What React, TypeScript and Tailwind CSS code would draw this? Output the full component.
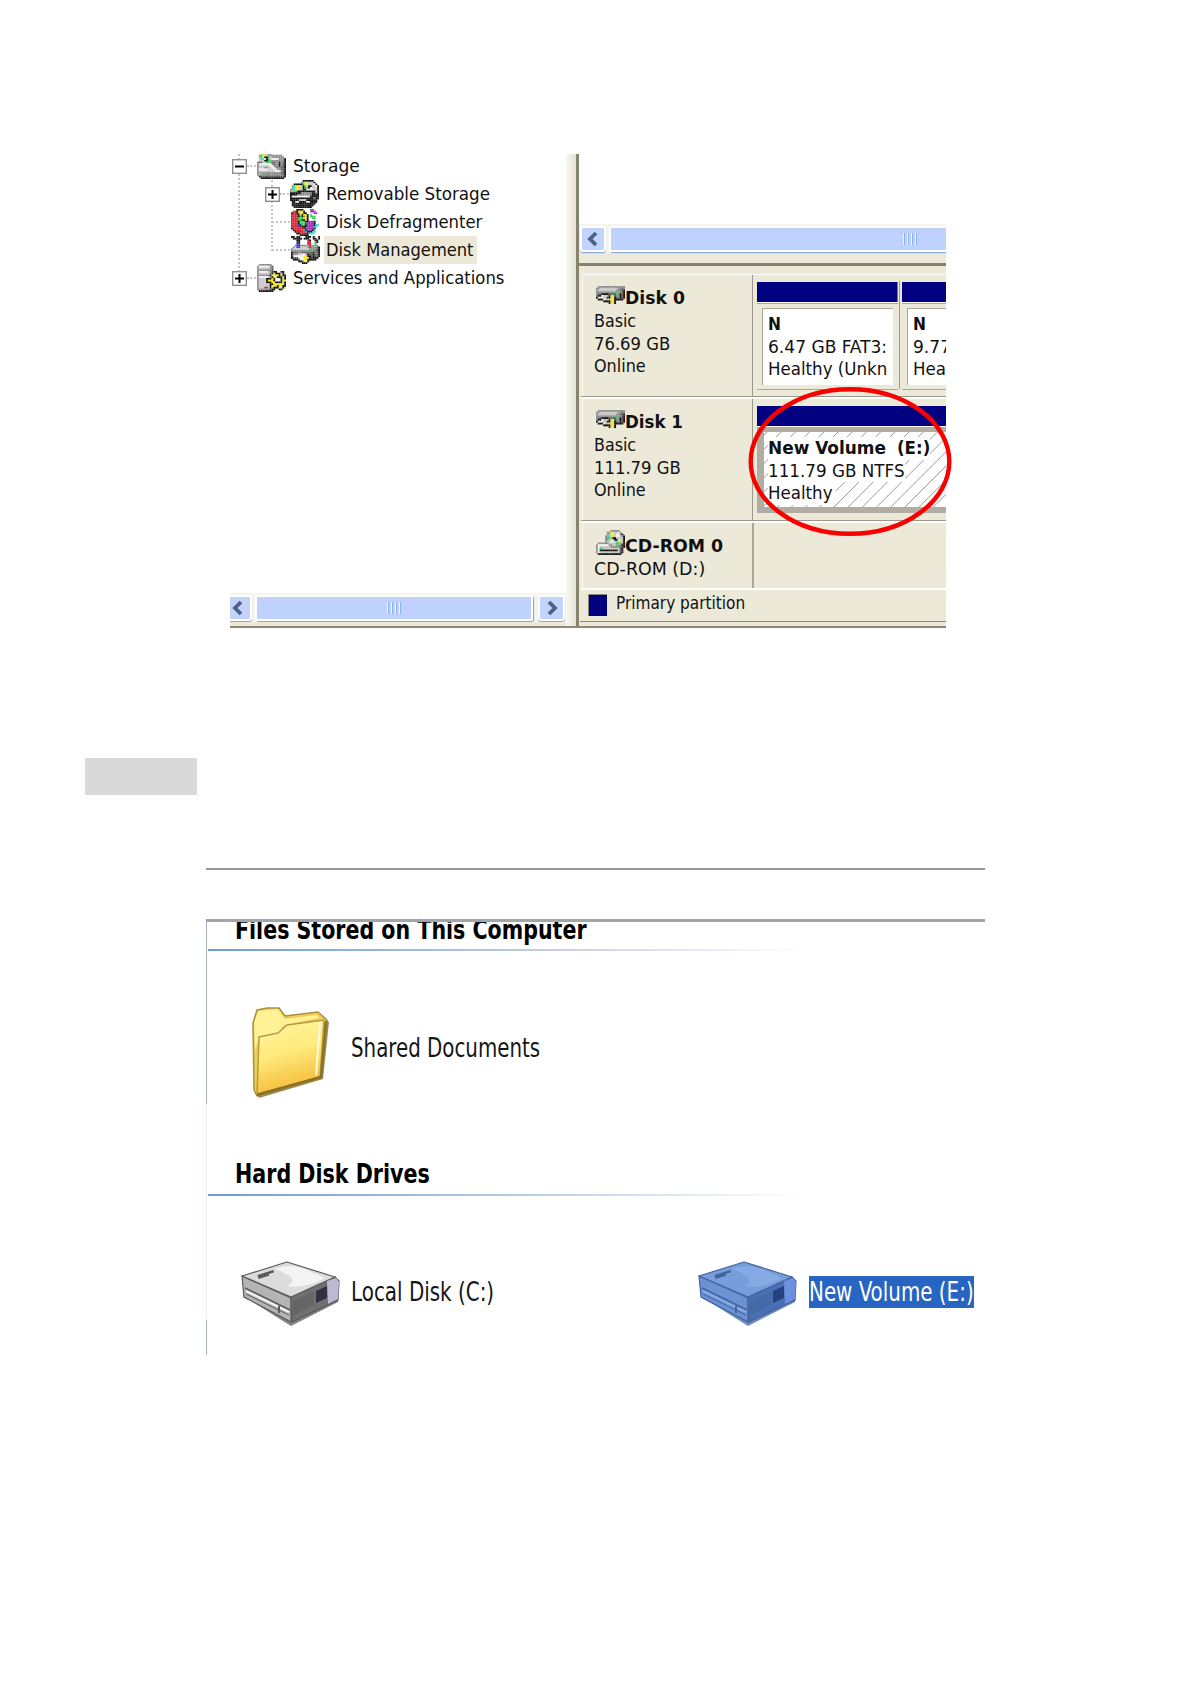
import React, { useLayoutEffect, useRef, useState } from 'react';

interface LabelProps {
  children: string;
  width: number;
  className?: string;
}

// Text squeezed or stretched to a given width
const Label: React.FC<LabelProps> = ({ children, width, className = '' }) => {
  const ref = useRef<HTMLSpanElement>(null);
  const [scale, setScale] = useState(1);

  useLayoutEffect(() => {
    if (ref.current) setScale(width / ref.current.offsetWidth);
  }, [width]);

  return (
    <span className={`block shrink-0 ${className}`} style={{ width }}>
      <span ref={ref} className="inline-block origin-left whitespace-pre" style={{ transform: `scaleX(${scale})` }}>
        {children}
      </span>
    </span>
  );
};

const PALETTE: Record<string, string> = {
  k: '#111111',
  d: '#5c5c5c',
  g: '#8d8d8d',
  l: '#c6c6c6',
  w: '#f4f4f4',
  y: '#f2e52c',
  o: '#8f8412',
  e: '#35cf55',
  c: '#35d3d3',
  r: '#d61f2c',
  m: '#9d2cb4',
  b: '#2438c4',
};

const STORAGE = [
  '..eyylgg........',
  '.eeyylgggggggg..',
  '.ceykkglggggggg.',
  '.lccwkelwwwwgggk',
  '.lllkkeegggggggk',
  'gddlleegddggkgdk',
  'gwwwwwwwgdggkgdk',
  'gllllllwwgggkgdk',
  'glllggllwwgggddk',
  'gwwwwwlllwwggddk',
  'glllllllllwwwgdk',
  'gggggggggggggddk',
  'glegggggggggggdk',
  '.kdddddddddddddk',
  '..kkkkkkkkkkkkk.',
];

const REMOVABLE = [
  '.......kkkkkk...',
  '......gcyylllk..',
  '..kkkkkeyylllwk.',
  '.gcyyylkeykkllwk',
  '.ccyyllkeekwlllk',
  'gecyyllkkwwwwllk',
  'gleekkkkkkkkkklk',
  'kkkkkkggggggkkgk',
  'kkkkggggggggkkkk',
  'kwwwwwwwwwwkkkkk',
  'kkkkkkkkkkkkkgkk',
  'kkkkkllllkkkkkk.',
  '.kkwwkkkkwwkkkk.',
  '.kkkkkkkkkkkkk..',
  '.kkkkkkkkkkkk...',
  '..kkkkkkkkkk....',
];

const DEFRAG = [
  '...kkkk....mm...',
  '.rrkyyyk...mmm..',
  'krrkoyykk....mm.',
  'rrrrkykyyk.e....',
  'rrrrkekoyk.eee..',
  'rrrreeeyyk..ee..',
  'rrrroekkyk......',
  'rrrrkeeekkmmmk..',
  'rrrrkeeemmmmmk..',
  'rrrrbkeekmmmmkcc',
  'rrrrrbkkkmmmmcc.',
  'krrrrrrkmmmmmk..',
  '.krrrrrckmmmkc..',
  '..krrrrrckkkcc..',
  '...kkrrrrkccc...',
  '.....kkkkk......',
];

const MANAGEMENT = [
  'kk.kk...kkk.k..k',
  '.kkkkk.kkk..kk.k',
  '...kk....rk..kk.',
  '...bk....rr..ek.',
  '...bb....rr..e..',
  '..gbbgggggrggeg.',
  '.glbbllllgrgggdk',
  'glllllllllggggdk',
  'ggggggggggeegddk',
  'kdddggddddddkgdk',
  'kgggllwwgkddkddk',
  'klwwwwwyykkdkddk',
  'kdddwwwyyykdkkk.',
  '.kkkdwwyykkkkk..',
  '....kkdyyk......',
  '......kkk.......',
];

const SERVICES = [
  '.ggggggg........',
  'gwwwwwwgd.......',
  'gllllllgd.......',
  'ggggggggd.......',
  'gwwwwwlgdkk..kk.',
  'gllllllgkykkkyk.',
  'gggggggkyyyykykk',
  'gwwwwwlgkyykkkyk',
  'gllllkkkyk...kyk',
  'gllllkyyyk...kyy',
  'gllllkkkyykkkkyk',
  'gllllllkkyyyyyyk',
  'gllllllkyyykyykk',
  'glllrrlkykkkyyk.',
  'gggggggdkk..kk..',
  '.kkkkkkkk.......',
];

const DISK = [
  '.ggggggggggggggg',
  'ggllllllllllggdg',
  'gllllllllllggddk',
  'ggggggggggegggdk',
  'gddkkkkddddegkdk',
  'gkkwlllkyydggkdk',
  'kwwwllkkyykdgkdk',
  '.kkkwlllyykkkkk.',
  '....kkkkyyk.....',
  '.......kyyk.....',
];

const CDROM = [
  '........ggggg...',
  '......ggyyllwg..',
  '......gcyylwwgk.',
  '.....gccyylwwlgk',
  '.....geelkkllllk',
  '.....gelllkkwylk',
  '.....gllwwlcyylk',
  '.gggggglllleecgk',
  'gwwwwwwgglleegkk',
  'gwllllllgggggddk',
  'gweellllllllldk.',
  'gwkkkkkkkkkkldk.',
  'gwllllllllllldk.',
  '.kkkkkkkkkkkkk..',
];

const PixelIcon: React.FC<{ map: string[]; className: string }> = ({ map, className }) => (
  <svg viewBox={`0 0 16 ${map.length}`} preserveAspectRatio="none" className={`block shrink-0 ${className}`}>
    {map.flatMap((line, y) =>
      line.split('').map((ch, x) =>
        ch === '.' ? null : <rect key={`${x}-${y}`} x={x} y={y} width={1.05} height={1.05} fill={PALETTE[ch]} />
      )
    )}
  </svg>
);

const Expander: React.FC<{ open?: boolean }> = ({ open }) => (
  <svg viewBox="0 0 15 15" className="block w-[15px] h-[15px] shrink-0">
    <rect x="0.7" y="0.7" width="13.6" height="13.6" fill="#fff" stroke="#8f8f8f" strokeWidth="1.4" />
    <path d={open ? 'M3 7.5h9' : 'M3 7.5h9M7.5 3v9'} stroke="#000" strokeWidth="2" />
  </svg>
);

const Dots = () => <div className="w-[9px] shrink-0 border-t-2 border-dotted border-[#c4c4c4]" />;

const Tree = () => (
  <div className="relative h-[439px] overflow-hidden text-[17px] leading-[28px] text-[#111]">
    <div className="absolute left-[8px] top-0 h-[118px] border-l-2 border-dotted border-[#c4c4c4]" />
    <div className="absolute left-[41px] top-[26px] h-[71px] border-l-2 border-dotted border-[#c4c4c4]" />
    <div className="relative -mt-[2px]">
      <div className="flex items-center h-[28px] pl-[2px]">
        <Expander open />
        <Dots />
        <PixelIcon map={STORAGE} className="w-[29px] h-[26px] ml-[1px] mr-[7px]" />
        <Label width={67}>Storage</Label>
      </div>
      <div className="flex items-center h-[28px] pl-[35px]">
        <Expander />
        <Dots />
        <PixelIcon map={REMOVABLE} className="w-[29px] h-[28px] ml-[1px] mr-[7px]" />
        <Label width={164}>Removable Storage</Label>
      </div>
      <div className="flex items-center h-[28px] pl-[42px]">
        <div className="w-[18px] shrink-0 border-t-2 border-dotted border-[#c4c4c4]" />
        <PixelIcon map={DEFRAG} className="w-[28px] h-[27px] ml-[1px] mr-[7px]" />
        <Label width={156}>Disk Defragmenter</Label>
      </div>
      <div className="flex items-center h-[28px] pl-[42px]">
        <div className="w-[18px] shrink-0 border-t-2 border-dotted border-[#c4c4c4]" />
        <PixelIcon map={MANAGEMENT} className="w-[29px] h-[28px] ml-[1px] mr-[4px]" />
        <div className="bg-[#ece9d8] w-[153px] pl-[2px]">
          <Label width={147}>Disk Management</Label>
        </div>
      </div>
      <div className="flex items-center h-[28px] pl-[2px]">
        <Expander />
        <Dots />
        <PixelIcon map={SERVICES} className="w-[29px] h-[28px] ml-[1px] mr-[7px]" />
        <Label width={211}>Services and Applications</Label>
      </div>
    </div>
  </div>
);

const ScrollArrow: React.FC<{ right?: boolean; className: string }> = ({ right, className }) => (
  <div
    className={`flex items-center justify-center shrink-0 h-[26px] rounded-[3px] border-2 border-white bg-[#c2d3fc] shadow-[0_1px_1px_#7f9fdc] ${className}`}
  >
    <svg viewBox="0 0 12 16" className="w-[12px] h-[16px]">
      <path d={right ? 'M3 2l6 6-6 6' : 'M9 2L3 8l6 6'} fill="none" stroke="#4d6185" strokeWidth="3.8" />
    </svg>
  </div>
);

const Grip = () => (
  <div className="flex gap-[2px]">
    {[0, 1, 2, 3].map((i) => (
      <div key={i} className="w-[2px] h-[12px] border-l border-[#eef4fe] bg-[#8cb0f8]" />
    ))}
  </div>
);

const DriveHeading: React.FC<{ map: string[]; name: string; width: number; icon: string }> = ({
  map,
  name,
  width,
  icon,
}) => (
  <div className="flex h-[23px] pl-[2px]">
    <PixelIcon map={map} className={icon} />
    <Label width={width} className="font-bold">
      {name}
    </Label>
  </div>
);

const DiskCell: React.FC<{ children: React.ReactNode; className?: string }> = ({ children, className = '' }) => (
  <div className={`w-[170px] ml-[3px] pl-[11px] shrink-0 border-l border-[#faf9f4] ${className}`}>{children}</div>
);

const Row: React.FC<{ children: React.ReactNode; className: string }> = ({ children, className }) => (
  <div className={`flex shrink-0 overflow-hidden ${className}`}>{children}</div>
);

const Rule = () => <div className="h-[3px] shrink-0 ml-[2px] border-t border-[#9c998c] bg-[#fffffa]" />;

const Partition: React.FC<{ lines: [string, number][]; name: string; className: string; box: string }> = ({
  lines,
  name,
  className,
  box,
}) => (
  <div className={`shrink-0 h-[108px] border-b border-[#aaa796] ${className}`}>
    <div className="h-[20px] bg-[#000080] border-r border-[#77756e]" />
    <div className="h-[1px] bg-white" />
    <div className="h-[1px] bg-[#aaa796]" />
    <div
      className={`mt-[4px] ml-[5px] h-[77px] border-t border-l border-[#aaa796] bg-white pl-[5px] pt-[4px] overflow-hidden ${box}`}
    >
      <Label width={13} className="font-bold">
        {name}
      </Label>
      {lines.map(([text, width]) => (
        <Label key={text} width={width}>
          {text}
        </Label>
      ))}
    </div>
  </div>
);

const DiskList = () => (
  <div className="text-[18.5px] leading-[22.6px] text-[#111]">
    <Row className="h-[121px]">
      <DiskCell className="pt-[12px]">
        <DriveHeading map={DISK} name="Disk 0" width={60} icon="w-[29px] h-[18px] -mt-[1px]" />
        <Label width={42}>Basic</Label>
        <Label width={76}>76.69 GB</Label>
        <Label width={52}>Online</Label>
      </DiskCell>
      <div className="flex flex-1 border-l border-[#9c998c] pl-[4px] pt-[7px] min-w-0">
        <Partition
          name="N"
          lines={[
            ['6.47 GB FAT3:', 119],
            ['Healthy (Unkn', 119],
          ]}
          className="w-[141px]"
          box="w-[131px]"
        />
        <div className="w-[3px] shrink-0 h-[108px] border-l border-[#9c998c] ml-[1px] -mt-[1px]" />
        <Partition
          name="N"
          lines={[
            ['9.77', 38],
            ['Hea', 33],
          ]}
          className="w-[80px]"
          box="w-[80px]"
        />
      </div>
    </Row>
    <Rule />
    <Row className="h-[121px]">
      <DiskCell className="pt-[12px]">
        <DriveHeading map={DISK} name="Disk 1" width={58} icon="w-[29px] h-[18px] -mt-[1px]" />
        <Label width={42}>Basic</Label>
        <Label width={87}>111.79 GB</Label>
        <Label width={52}>Online</Label>
      </DiskCell>
      <div className="flex-1 border-l border-[#9c998c] pl-[4px] pt-[7px]">
        <div className="h-[20px] bg-[#000080]" />
        <div className="h-[87px] bg-[#b1ada0] border-t border-white pt-[5px] pl-[7px]">
          <div className="relative h-[75px] bg-white overflow-hidden">
            <svg viewBox="0 0 182 75" className="absolute inset-0 w-[182px] h-[75px]">
              {Array.from({ length: 19 }, (_, i) => (
                <path key={i} d={`M${i * 14.2 - 72} 75l75-75`} stroke="#9a9a9a" strokeWidth="1" />
              ))}
            </svg>
            <div className="relative pt-[5px] pl-[4px]">
              <div className="flex w-max bg-white">
                <Label width={118} className="font-bold">
                  New Volume
                </Label>
                <Label width={33} className="font-bold ml-[11px]">
                  (E:)
                </Label>
              </div>
              <div className="w-max bg-white">
                <Label width={137}>111.79 GB NTFS</Label>
              </div>
              <div className="w-max bg-white pr-[3px]">
                <Label width={65}>Healthy</Label>
              </div>
            </div>
          </div>
        </div>
      </div>
    </Row>
    <Rule />
    <Row className="h-[65px]">
      <DiskCell className="pt-[12px]">
        <DriveHeading map={CDROM} name="CD-ROM 0" width={98} icon="w-[29px] h-[25px] -mt-[5px]" />
        <Label width={111}>CD-ROM (D:)</Label>
      </DiskCell>
      <div className="flex-1 border-l-2 border-[#aaa796]" />
    </Row>
    <div className="h-[2px] ml-[2px] bg-[#fffffa]" />
    <div className="flex h-[32px] pl-[8px] ml-[1px] border-b border-[#8b8879]">
      <div className="w-[19px] h-[22px] mt-[4px] bg-[#000080] border-t border-l border-[#8b8879]" />
      <Label width={129} className="ml-[9px] mt-[2px]">
        Primary partition
      </Label>
    </div>
  </div>
);

const DiskManagement = () => (
  <div className="relative flex w-[716px] h-[474px] ml-[230px] border-b-2 border-[#8b8879]">
    <div className="w-[336px] shrink-0">
      <Tree />
      <div className="flex items-center h-[29px] bg-[#f6f4ee] overflow-hidden">
        <ScrollArrow className="w-[28px] -ml-[6px]" />
        <div className="flex items-center justify-center w-[278px] h-[26px] ml-[3px] mr-[5px] rounded-[3px] border-2 border-white bg-linear-to-b from-[#c0d0fc] to-[#bfd3ff] shadow-[1px_1px_1px_#7f9fdc]">
          <Grip />
        </div>
        <ScrollArrow right className="w-[27px]" />
      </div>
      <div className="h-[4px] bg-[#ece9d8]" />
    </div>
    <div className="w-[13px] shrink-0 bg-linear-to-r from-[#f8f7f2] to-[#e6e3d2] border-r-[3px] border-[#86846f]" />
    <div className="w-[367px] shrink-0 bg-[#ece9d8] overflow-hidden">
      <div className="h-[70px] bg-white" />
      <div className="flex items-center h-[29px] bg-[#f6f4ee] pl-[1px]">
        <ScrollArrow className="w-[26px]" />
        <div className="flex items-center justify-start w-[360px] shrink-0 h-[26px] ml-[3px] pl-[292px] rounded-[3px] border-2 border-white bg-linear-to-b from-[#c0d0fc] to-[#bfd3ff] shadow-[1px_1px_1px_#7f9fdc]">
          <Grip />
        </div>
      </div>
      <div className="h-[10px]" />
      <div className="h-[3px] bg-[#85836f]" />
      <div className="h-[8px]" />
      <div className="h-[1px] ml-[3px] bg-white" />
      <DiskList />
    </div>
    {/* Red marker around the new volume */}
    <svg viewBox="0 0 204 150" className="absolute left-[518px] top-[232px] w-[204px] h-[150px]">
      <ellipse cx="102" cy="75.5" rx="99.3" ry="72.3" fill="none" stroke="#f80000" strokeWidth="4.4" />
    </svg>
  </div>
);

const FolderIcon = () => (
  <svg viewBox="0 0 80 94" className="block w-[80px] h-[94px] shrink-0">
    <defs>
      <linearGradient id="folder" x1="0" y1="0" x2="0.25" y2="1">
        <stop offset="0" stopColor="#fff6a6" />
        <stop offset="0.5" stopColor="#ffeb7c" />
        <stop offset="1" stopColor="#f6bd3c" />
      </linearGradient>
    </defs>
    <path d="M8 92L72 73 78 16 72 12 70 66 6 86z" fill="#756322" opacity="0.75" />
    <path
      d="M2 17L6 4 16 2 28 2 34 10 67 6 76 14 70 72 6 90 3 84z"
      fill="#f1ce55"
      stroke="#aa913b"
      strokeWidth="1.5"
      strokeLinejoin="round"
    />
    <path d="M3 17L7 5 27 3 34 13 66 9 68 12 33 19 27 27 8 31 4 44z" fill="#fff195" />
    <path
      d="M8 31L27 27 36 19 73 14 69 71 6 88z"
      fill="url(#folder)"
      stroke="#b69a45"
      strokeWidth="1.5"
      strokeLinejoin="round"
    />
    <path d="M69 17L65 69" stroke="#fffbe0" strokeWidth="2" />
    <path d="M6 89L70 71 75 15" fill="none" stroke="#897125" strokeWidth="2.4" />
  </svg>
);

const GREY_DRIVE = ['#dcdcdc', '#b4b4b4', '#707070', '#5a5a5a', '#bdb9d2', '#30303e', '#f4f4f4'];
const BLUE_DRIVE = ['#779ddb', '#6c92d2', '#4a6fb4', '#42639f', '#6d8fdc', '#27407f', '#86abe4'];

const DriveIcon: React.FC<{ colors: string[] }> = ({ colors }) => {
  const [top, side, front, edge, cap, port, shine] = colors;
  return (
    <svg viewBox="0 0 100 66" className="block w-[100px] h-[66px] shrink-0">
      <path d="M4 36L50 65 97 41 97 36 51 55z" fill={edge} opacity="0.75" />
      <path d="M1 15L50 37 50 61 3 36z" fill={side} stroke={edge} strokeWidth="1.2" />
      <path d="M50 36L94 16 98 20 97 39 51 61z" fill={front} stroke={edge} strokeWidth="1.2" />
      <path d="M1 15L46 1 94 16 50 36z" fill={top} stroke={edge} strokeWidth="1.2" strokeLinejoin="round" />
      <path d="M34 8Q49 2 64 8L84 17Q65 28 46 25 61 18 34 8z" fill={shine} />
      <path d="M17 16L33 11" stroke={edge} strokeWidth="4" />
      <path d="M28 14L34 12" stroke={shine} strokeWidth="1.5" />
      <path d="M4 27L49 49" stroke={edge} strokeWidth="1.6" />
      <path d="M5 30L48 51" stroke={shine} strokeWidth="2" />
      <path d="M5 33L48 54" stroke={edge} strokeWidth="1" />
      <path d="M38 45v7" stroke={edge} strokeWidth="2" />
      <path d="M86 20L95 17 98 21 97 38 87 43z" fill={cap} />
      <path d="M75 30L86 25 86 37 75 42z" fill={port} />
      <path d="M52 40L73 31 73 43 52 55z" fill={edge} opacity="0.5" />
    </svg>
  );
};

const MyComputer = () => (
  <div className="ml-[206px] w-[779px] text-[26px] leading-[32px] text-[#151515]">
    <div className="h-[2px] bg-[#92979d]" />
    <div className="h-[49px]" />
    <div className="h-[3px] bg-[#a0a6aa]" />
    <div className="relative h-[433px]">
      <div className="absolute left-0 top-0 w-px h-[182px] bg-[#a6b0bd]" />
      <div className="absolute left-0 top-[182px] w-px h-[216px] bg-[#e9eff4]" />
      <div className="absolute left-0 top-[398px] w-px h-[35px] bg-[#a6b0bd]" />
      <div className="h-[27px] overflow-hidden">
        <Label width={352} className="ml-[29px] -mt-[8px] font-bold text-black">
          Files Stored on This Computer
        </Label>
      </div>
      <div className="h-[2px] w-[600px] ml-[2px] bg-linear-to-r from-[#6f9ad8] via-[#b5c9df] to-white" />
      <div className="flex items-center h-[204px] pl-[45px]">
        <FolderIcon />
        <Label width={189} className="ml-[20px] -mt-[11px]">
          Shared Documents
        </Label>
      </div>
      <Label width={195} className="ml-[29px] pt-[3px] h-[39px] font-bold text-black">
        Hard Disk Drives
      </Label>
      <div className="h-[2px] w-[600px] ml-[2px] bg-linear-to-r from-[#6f9ad8] via-[#b5c9df] to-white" />
      <div className="flex pl-[35px] pt-[65px]">
        <div className="flex w-[457px] shrink-0">
          <DriveIcon colors={GREY_DRIVE} />
          <Label width={143} className="ml-[10px] mt-[15px]">
            Local Disk (C:)
          </Label>
        </div>
        <DriveIcon colors={BLUE_DRIVE} />
        <div className="ml-[11px] mt-[15px] w-[165px] h-[32px] bg-[#2864c1] text-white">
          <Label width={165}>New Volume (E:)</Label>
        </div>
      </div>
    </div>
  </div>
);

const App = () => (
  <div className="w-[1190px] h-[1684px] overflow-hidden bg-white pt-[154px] font-['DejaVu_Sans_Condensed','DejaVu_Sans',sans-serif]">
    <DiskManagement />
    <div className="mt-[130px] ml-[85px] w-[112px] h-[37px] bg-[#d9d9d9]" />
    <div className="h-[73px]" />
    <MyComputer />
  </div>
);

export default App;
